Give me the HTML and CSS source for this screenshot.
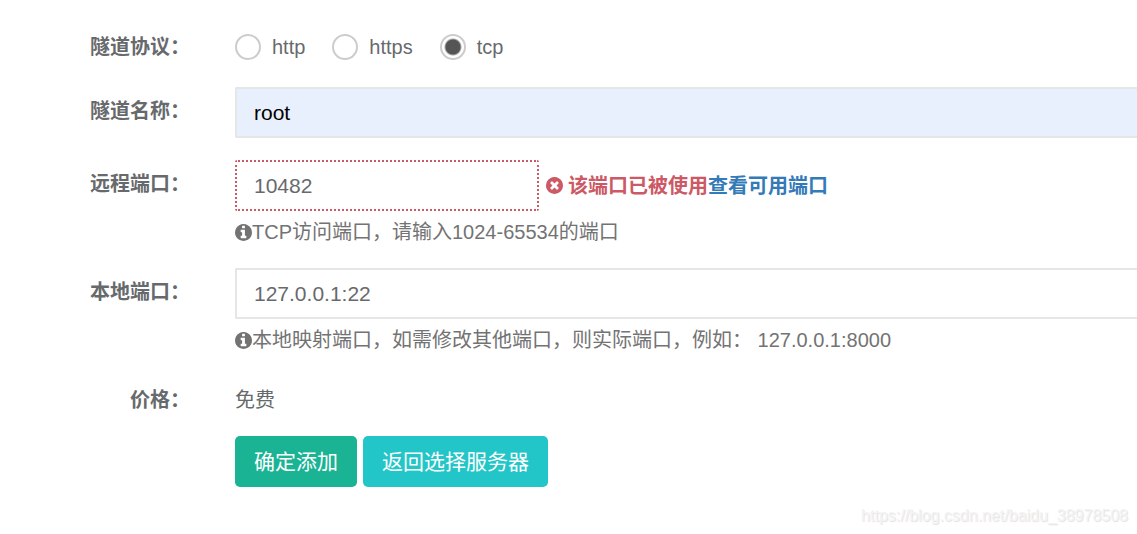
FILE: index.html
```html
<!DOCTYPE html>
<html lang="zh-CN">
<head>
<meta charset="utf-8">
<meta name="viewport" content="width=device-width, initial-scale=1">
<title>隧道</title>
<link rel="stylesheet" href="styles.css">
</head>
<body>
<svg class="sprite" aria-hidden="true">
  <symbol id="info" viewBox="128 128 1536 1536"><path d="M1152 1376v-160q0-14-9-23t-23-9h-96v-512q0-14-9-23t-23-9h-320q-14 0-23 9t-9 23v160q0 14 9 23t23 9h96v320h-96q-14 0-23 9t-9 23v160q0 14 9 23t23 9h448q14 0 23-9t9-23zM1024 480v-160q0-14-9-23t-23-9h-192q-14 0-23 9t-9 23v160q0 14 9 23t23 9h192q14 0 23-9t9-23zM1664 896q0 209-103 385.5t-279.5 279.5-385.5 103-385.5-103-279.5-279.5-103-385.5 103-385.5 279.5-279.5 385.5-103 385.5 103 279.5 279.5 103 385.5z"/></symbol>
  <symbol id="times" viewBox="128 128 1536 1536"><path d="M1277 1122q0-26-19-45l-181-181 181-181q19-19 19-45 0-27-19-46l-90-90q-19-19-46-19-26 0-45 19l-181 181-181-181q-19-19-45-19-27 0-46 19l-90 90q-19 19-19 46 0 26 19 45l181 181-181 181q-19 19-19 45 0 27 19 46l90 90q19 19 46 19 26 0 45-19l181-181 181 181q19 19 45 19 27 0 46-19l90-90q19-19 19-46zM1664 896q0 209-103 385.5t-279.5 279.5-385.5 103-385.5-103-279.5-279.5-103-385.5 103-385.5 279.5-279.5 385.5-103 385.5 103 279.5 279.5 103 385.5z"/></symbol>
</svg>
<form class="form">
  <div class="row row-choices" role="radiogroup" aria-labelledby="protocol">
    <span class="label" id="protocol">隧道协议：</span>
    <div class="choices">
      <label class="choice"><input class="radio" type="radio" name="protocol" value="http">http</label>
      <label class="choice"><input class="radio" type="radio" name="protocol" value="https">https</label>
      <label class="choice"><input class="radio" type="radio" name="protocol" value="tcp" checked>tcp</label>
    </div>
  </div>
  <div class="row">
    <label class="label" for="name">隧道名称：</label>
    <input class="input input-filled" id="name" type="text" value="root">
  </div>
  <div class="row">
    <label class="label" for="remote">远程端口：</label>
    <div>
      <div class="field">
        <input class="input input-error" id="remote" type="text" value="10482" aria-invalid="true">
        <div class="error"><svg class="icon" aria-hidden="true"><use href="#times"/></svg><span>该端口已被使用<a class="link" href="#">查看可用端口</a></span></div>
      </div>
      <p class="hint"><svg class="icon" aria-hidden="true"><use href="#info"/></svg>TCP访问端口，请输入1024-65534的端口</p>
    </div>
  </div>
  <div class="row">
    <label class="label" for="local">本地端口：</label>
    <div>
      <input class="input" id="local" type="text" value="127.0.0.1:22">
      <p class="hint"><svg class="icon" aria-hidden="true"><use href="#info"/></svg>本地映射端口，如需修改其他端口，则实际端口，例如： 127.0.0.1:8000</p>
    </div>
  </div>
  <div class="row">
    <span class="label">价格：</span>
    <span class="value">免费</span>
  </div>
  <div class="row">
    <div class="actions">
      <button class="button button-primary" type="submit">确定添加</button>
      <button class="button button-info" type="button">返回选择服务器</button>
    </div>
  </div>
</form>
<div class="watermark">https://blog.csdn.net/baidu_38978508</div>
</body>
</html>
```
FILE: styles.css
```css
* {
  box-sizing: border-box;
}

body {
  margin: 0;
  background: #fff;
  color: #676a6c;
  font: 20px/28px "Liberation Sans", "Noto Sans CJK SC", sans-serif;
}

.sprite {
  display: none;
}

.form {
  display: flex;
  flex-direction: column;
  gap: 22px;
  padding: 23px 0;
}

.row {
  display: grid;
  grid-template-columns: 190px minmax(0, 1fr);
  column-gap: 45px;
}

.row-choices {
  padding-bottom: 4px;
}

.label {
  padding-top: 10px;
  font-weight: 700;
  text-align: right;
}

.value {
  padding-top: 10px;
}

.choices {
  display: flex;
  gap: 27px;
  padding-top: 10px;
}

.choice {
  display: flex;
  align-items: center;
  gap: 11px;
}

.radio {
  appearance: none;
  width: 26px;
  height: 26px;
  margin: 0;
  border: 2px solid #ccc;
  border-radius: 50%;
  background: #fff;
}

.radio:checked {
  background: radial-gradient(circle, #555 7px, #fff 9px);
}

.input {
  display: block;
  width: 100%;
  height: 51px;
  padding: 0 17px;
  border: 2px solid #e5e6e7;
  border-right: 0;
  border-radius: 2px 0 0 2px;
  background: #fff;
  color: #676a6c;
  font: inherit;
  font-size: 21px;
}

.input-filled {
  background: #e8f0fe;
  color: #000;
}

.input-error {
  width: 304px;
  border: 2px dotted #cc5965;
  border-radius: 2px;
}

.field {
  display: flex;
  align-items: center;
  gap: 7px;
}

.error {
  display: flex;
  align-items: center;
  gap: 5px;
  color: #cc5965;
  font-weight: 700;
}

.icon {
  flex: none;
  width: 17px;
  height: 17px;
  fill: currentColor;
}

.link {
  color: #337ab7;
  text-decoration: none;
}

.hint {
  display: flex;
  align-items: center;
  margin: 7px 0 0;
  color: #737373;
}

.actions {
  display: flex;
  grid-column: 2;
  gap: 6px;
}

.button {
  height: 51px;
  padding: 0 19px;
  border: 0;
  border-radius: 5px;
  color: #fff;
  font: inherit;
  font-size: 21px;
}

.button-primary {
  background: #1ab394;
}

.button-info {
  background: #23c6c8;
}

.watermark {
  position: absolute;
  right: 9px;
  bottom: 4px;
  color: #f4f4f4;
  font-size: 16px;
  text-shadow: 1px 1px 1px #e0e0e0;
}
```
